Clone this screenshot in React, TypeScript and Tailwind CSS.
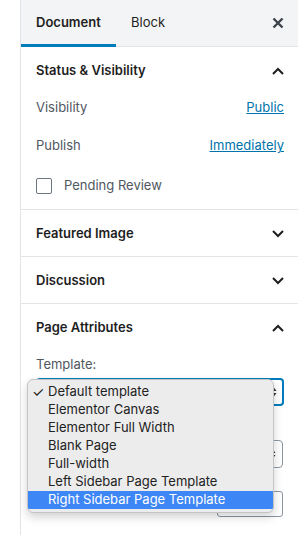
import React from "react";

const font = { fontFamily: "Inter, 'Noto Sans', 'Liberation Sans', sans-serif" };

function ChevronUp() {
  return (
    <svg width="12" height="8" viewBox="0 0 12 8" className="block">
      <polyline points="1,7 6,2 11,7" fill="none" stroke="#1e1e1e" strokeWidth="2" />
    </svg>
  );
}
function ChevronDown() {
  return (
    <svg width="12" height="8" viewBox="0 0 12 8" className="block">
      <polyline points="1,1 6,6 11,1" fill="none" stroke="#1e1e1e" strokeWidth="2" />
    </svg>
  );
}
function CloseIcon() {
  return (
    <svg width="12" height="12" viewBox="0 0 12 12" className="block">
      <path d="M1.5 1.5 L10.5 10.5 M10.5 1.5 L1.5 10.5" stroke="#3c434a" strokeWidth="2.4" />
    </svg>
  );
}
function UpDown() {
  return (
    <svg width="7" height="12" viewBox="0 0 7 12" className="block">
      <path d="M3.5 1 L6.5 5 L0.5 5 Z" fill="#333" />
      <path d="M3.5 11 L6.5 7 L0.5 7 Z" fill="#333" />
    </svg>
  );
}

function PanelHeader({ title, open }: { title: string; open: boolean }) {
  return (
    <div className="h-[46px] pt-[2px] flex items-center justify-between pl-[15px] pr-[15px]">
      <span className="text-[13px] font-semibold text-[#1e1e1e]">{title}</span>
      {open ? <ChevronUp /> : <ChevronDown />}
    </div>
  );
}

const items = [
  "Default template",
  "Elementor Canvas",
  "Elementor Full Width",
  "Blank Page",
  "Full-width",
  "Left Sidebar Page Template",
  "Right Sidebar Page Template",
];

export default function App() {
  return (
    <div className="relative w-[298px] h-[535px] overflow-hidden bg-white flex" style={font}>
      <div className="w-[20px] shrink-0" />
      <div className="flex-1 border-l border-[#e2e4e7] flex flex-col">
        {/* Tabs */}
        <div className="h-[47px] bg-[#f3f4f5] border-b border-[#e2e4e7] flex items-stretch">
          <div className="relative w-[95px] flex items-center pl-[15px] text-[13px] font-semibold text-[#1e1e1e]">
            Document
            <div className="absolute left-0 right-0 bottom-[-1px] h-[3px] bg-[#007cba]" />
          </div>
          <div className="flex items-center pl-[15px] text-[13px] text-[#1e1e1e]">Block</div>
          <div className="flex-1" />
          <div className="flex items-center pr-[15px]">
            <CloseIcon />
          </div>
        </div>

        {/* Status & Visibility */}
        <div className="border-b border-[#e2e4e7]">
          <PanelHeader title="Status & Visibility" open />
          <div className="px-[15px] pb-[10px]">
            <div className="mt-[2px] h-[26px] flex items-center justify-between text-[13px]">
              <span className="text-[#50575e]">Visibility</span>
              <span className="text-[#0073aa] underline">Public</span>
            </div>
            <div className="mt-[12px] h-[26px] flex items-center justify-between text-[13px]">
              <span className="text-[#50575e]">Publish</span>
              <span className="text-[#0073aa] underline">Immediately</span>
            </div>
            <div className="mt-[14px] h-[26px] flex items-center text-[13px]">
              <div className="w-[16px] h-[16px] border-[1.5px] border-[#6c7781] rounded-[2px] bg-white" />
              <span className="ml-[12px] text-[#50575e]">Pending Review</span>
            </div>
          </div>
        </div>

        <div className="border-b border-[#e2e4e7]">
          <PanelHeader title="Featured Image" open={false} />
        </div>
        <div className="border-b border-[#e2e4e7]">
          <PanelHeader title="Discussion" open={false} />
        </div>

        {/* Page Attributes */}
        <div>
          <PanelHeader title="Page Attributes" open />
          <div className="px-[15px]">
            <div className="h-[16px] mt-[7px] flex items-center text-[13px] text-[#50575e]">Template:</div>
            <div className="mt-[5px] h-[28px] w-[248px] border-[2px] border-[#007cba] rounded-[4px] flex items-center justify-end pr-[5px]">
              <UpDown />
            </div>
            <div className="mt-[34px] h-[28px] w-[247px] border border-[#8d96a0] rounded-[4px] flex items-center justify-end pr-[6px]">
              <UpDown />
            </div>
            <div className="mt-[23px] flex justify-end pr-[1px]">
              <div className="h-[26px] w-[66px] border border-[#8d96a0] rounded-[3px] bg-white" />
            </div>
          </div>
        </div>
      </div>

      {/* Native dropdown menu */}
      <div className="absolute left-[27px] top-[379px] w-[247px] h-[134px] bg-[#ececec] border border-[#c4c4c4] rounded-[6px] shadow-[0_4px_10px_rgba(0,0,0,0.18)] pt-[3px] overflow-hidden">
        {items.map((it, i) => (
          <div
            key={it}
            className={
              i === items.length - 1
                ? "relative h-[18px] flex items-center pl-[20px] text-[13px] bg-[#3d86f5] text-white"
                : "relative h-[18px] flex items-center pl-[20px] text-[13px] text-[#222]"
            }
          >
            {i === 0 && <span className="absolute left-[4px] text-[14px] leading-none">✓</span>}
            {it}
          </div>
        ))}
      </div>
    </div>
  );
}
